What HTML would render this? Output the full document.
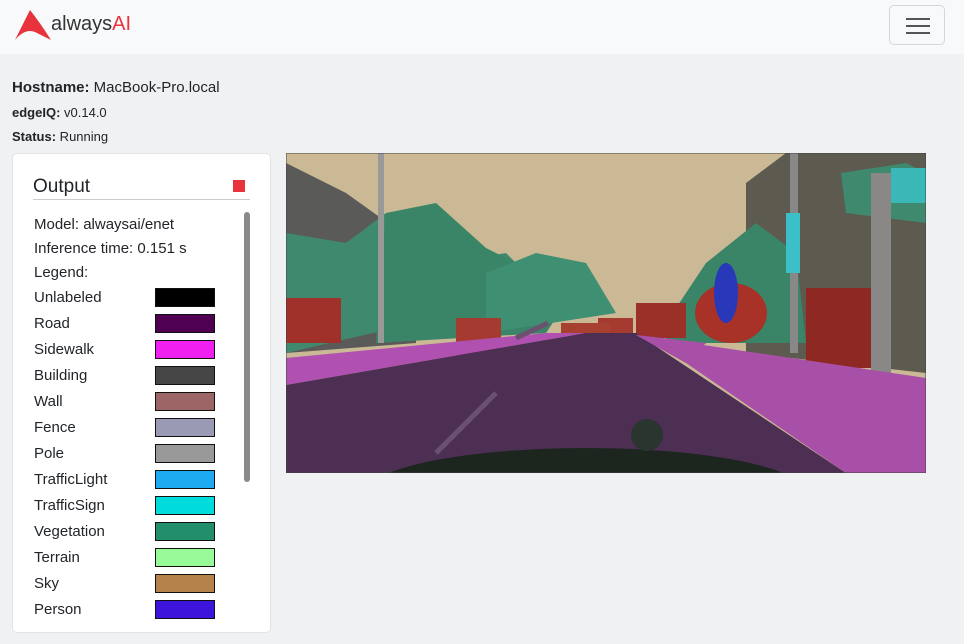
<!DOCTYPE html>
<html><head><style>
*{box-sizing:border-box;margin:0;padding:0}
body{width:964px;height:644px;background:#f0f1f3;font-family:"Liberation Sans",sans-serif;color:#212529;position:relative;overflow:hidden}
.nav{position:absolute;left:0;top:0;width:964px;height:54px;background:#f8f9fa}
.logo{position:absolute;left:15px;top:10px}
.brand{position:absolute;left:51px;top:13px;font-size:20px;color:#333}
.brand b{color:#e8323c;font-weight:normal}
.tog{position:absolute;left:889px;top:5px;width:56px;height:40px;border:1px solid #d5d6d8;border-radius:5px}
.tog i{position:absolute;left:16px;width:24px;height:2px;background:#555}
.info{position:absolute;left:12px;font-size:13.5px}
.card{position:absolute;left:12px;top:153px;width:259px;height:480px;background:#fff;border:1px solid #e2e3e5;border-radius:5px;overflow:hidden}
.ttl{position:absolute;left:20px;top:22px;font-size:19px}
.hr{position:absolute;left:20px;top:45px;width:217px;height:1px;background:#ccc}
.red{position:absolute;left:220px;top:26px;width:12px;height:12px;background:#e8323c}
.sb{position:absolute;left:231px;top:58px;width:6px;height:270px;background:#8a8a8a;border-radius:3px}
.t{position:absolute;left:21px;font-size:15px;margin-top:1px}
.sw{position:absolute;left:142px;width:60px;height:19px;border:1px solid #111}
</style></head><body>
<div class="nav">
<svg class="logo" width="36" height="30" viewBox="0 0 36 30"><path d="M15 0 L0 30 Q10 18 20 22 Q28 26 36 30 Q26 14 15 0Z M10 22 Q16 16 24 20 L17 6Z" fill="#e8323c"/></svg>
<div class="brand">always<b>AI</b></div>
<div class="tog"><i style="top:12px"></i><i style="top:19px"></i><i style="top:26px"></i></div>
</div>
<div class="info" style="top:79px;font-size:15px"><b>Hostname:</b> MacBook-Pro.local</div>
<div class="info" style="top:105px;font-size:13px"><b>edgeIQ:</b> v0.14.0</div>
<div class="info" style="top:129px;font-size:13px"><b>Status:</b> Running</div>
<div class="card">
<div class="ttl">Output</div><div class="red"></div><div class="hr"></div><div class="sb"></div>
<div class="t" style="top:61px">Model: alwaysai/enet</div>
<div class="t" style="top:85px">Inference time: 0.151 s</div>
<div class="t" style="top:109px">Legend:</div>
<div class="t" style="top:134px">Unlabeled</div><div class="sw" style="top:134px;background:#000"></div>
<div class="t" style="top:160px">Road</div><div class="sw" style="top:160px;background:#500050"></div>
<div class="t" style="top:186px">Sidewalk</div><div class="sw" style="top:186px;background:#f020f0"></div>
<div class="t" style="top:212px">Building</div><div class="sw" style="top:212px;background:#464646"></div>
<div class="t" style="top:238px">Wall</div><div class="sw" style="top:238px;background:#9c6666"></div>
<div class="t" style="top:264px">Fence</div><div class="sw" style="top:264px;background:#9a9ab4"></div>
<div class="t" style="top:290px">Pole</div><div class="sw" style="top:290px;background:#999"></div>
<div class="t" style="top:316px">TrafficLight</div><div class="sw" style="top:316px;background:#1eaaf0"></div>
<div class="t" style="top:342px">TrafficSign</div><div class="sw" style="top:342px;background:#00dcdc"></div>
<div class="t" style="top:368px">Vegetation</div><div class="sw" style="top:368px;background:#238e6b"></div>
<div class="t" style="top:394px">Terrain</div><div class="sw" style="top:394px;background:#98fb98"></div>
<div class="t" style="top:420px">Sky</div><div class="sw" style="top:420px;background:#b4824a"></div>
<div class="t" style="top:446px">Person</div><div class="sw" style="top:446px;background:#3c14dc"></div>
</div>
<svg style="position:absolute;left:286px;top:153px" width="640" height="320" viewBox="0 0 640 320">
<rect width="640" height="320" fill="#cbb895"/>
<polygon points="0,10 60,40 130,90 130,190 0,200" fill="#5a5a58"/>
<polygon points="460,30 500,0 640,0 640,220 460,200" fill="#5d5a50"/>
<polygon points="0,80 60,90 100,60 160,110 220,100 260,140 0,200" fill="#3f8a6f"/>
<polygon points="100,60 150,50 200,95 250,120 280,150 260,180 90,190" fill="#3a8468"/>
<polygon points="200,120 250,100 300,110 330,160 200,180" fill="#3f8f72"/>
<polygon points="380,170 420,110 470,70 510,100 520,190 380,190" fill="#3a8468"/>
<polygon points="555,20 620,10 640,20 640,70 560,60" fill="#3f8a6f"/>
<rect x="504" y="0" width="8" height="200" fill="#888"/>
<rect x="585" y="20" width="20" height="205" fill="#8a8886"/>
<rect x="92" y="0" width="6" height="190" fill="#999"/>
<rect x="0" y="145" width="55" height="45" fill="#a0302a"/>
<rect x="170" y="165" width="45" height="40" fill="#a53a30"/>
<rect x="312" y="165" width="35" height="35" fill="#a53a30"/>
<rect x="275" y="170" width="50" height="12" fill="#a84032"/>
<rect x="350" y="150" width="50" height="35" fill="#9a3028"/>
<rect x="520" y="135" width="65" height="80" fill="#8e2822"/>
<ellipse cx="445" cy="160" rx="36" ry="30" fill="#a83228"/>
<ellipse cx="440" cy="140" rx="12" ry="30" fill="#2838b8"/>
<rect x="500" y="60" width="14" height="60" fill="#3cc0c8"/>
<rect x="605" y="15" width="35" height="35" fill="#3ab8b8"/>
<polygon points="0,205 260,180 300,180 0,232" fill="#b050b0"/>
<polygon points="0,232 300,180 350,180 560,320 0,320" fill="#4e2f54"/>
<polygon points="350,182 640,225 640,320 560,320 400,210" fill="#a850a8"/>
<polygon points="350,182 400,210 420,190" fill="#a850a8"/>
<path d="M150,300 L210,240 M230,185 L262,170" stroke="#6c5070" stroke-width="5"/>
<ellipse cx="300" cy="340" rx="220" ry="45" fill="#1c261f"/>
<circle cx="361" cy="282" r="16" fill="#2a3530"/>
<rect x="0" y="0" width="640" height="320" fill="none" stroke="#444"/>
</svg>
</body></html>
